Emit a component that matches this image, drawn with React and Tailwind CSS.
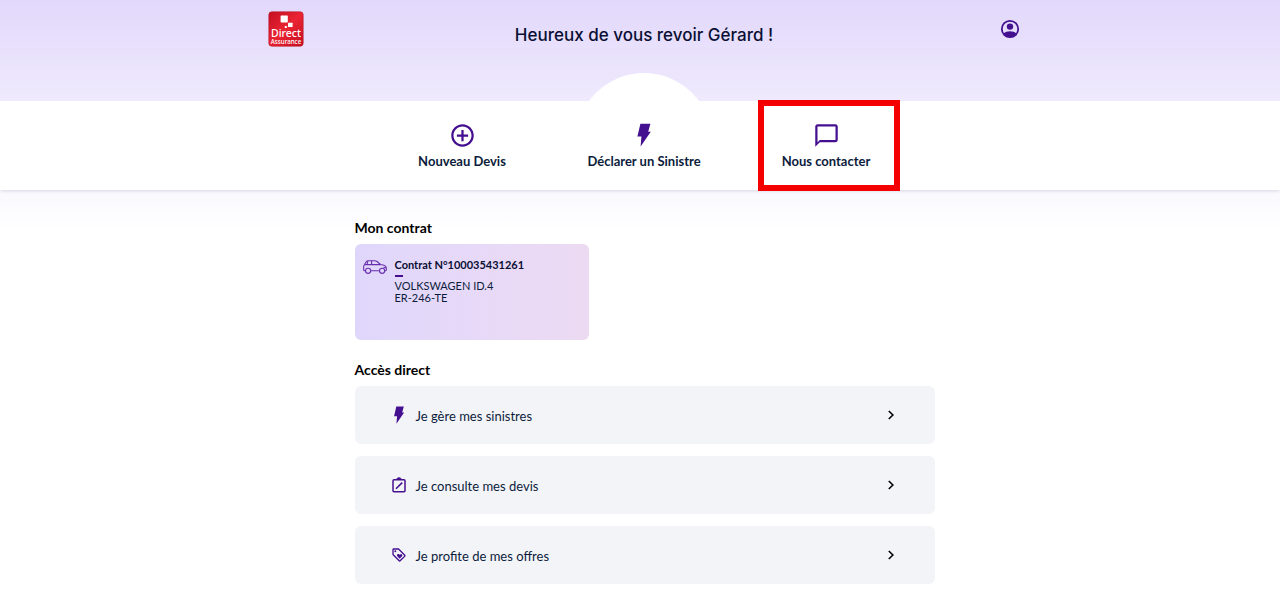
import { MdAddCircleOutline, MdChatBubbleOutline, MdOutlineLoyalty } from 'react-icons/md';

function DirectLogo() {
  return (
    <svg viewBox="0 0 36 36" className="size-9" role="img" aria-label="Direct Assurance">
      <defs>
        <linearGradient id="logoRed" x1="0" y1="0" x2="1" y2="1">
          <stop offset="0" stopColor="#c40f22" />
          <stop offset="0.5" stopColor="#ea2433" />
          <stop offset="1" stopColor="#c50d20" />
        </linearGradient>
      </defs>
      <rect x="0.8" y="0.8" width="34.4" height="34.4" rx="3" fill="url(#logoRed)" stroke="#b81a2c" strokeWidth="0.6" />
      <rect x="12.6" y="4.4" width="7.2" height="7" rx="0.6" fill="#fff" />
      <rect x="20" y="11.8" width="4.6" height="4.2" rx="0.5" fill="#fff" />
      <rect x="16.8" y="15" width="2" height="2" fill="#fff" />
      <text x="18" y="26.4" textAnchor="middle" fontFamily="Noto Sans, sans-serif" fontWeight="500" fontSize="10.5" fill="#fff">Direct</text>
      <text x="18" y="32.6" textAnchor="middle" fontFamily="Noto Sans, sans-serif" fontWeight="500" fontSize="6.2" fill="#fff">Assurance</text>
    </svg>
  );
}

function AccountIcon() {
  return (
    <svg viewBox="0 0 20 20" className="size-5" fill="none" aria-hidden="true">
      <circle cx="10" cy="10" r="8.2" stroke="currentColor" strokeWidth="1.8" />
      <circle cx="10" cy="7.6" r="3.2" fill="currentColor" />
      <path d="M3.6 14.6C5.2 13 7.5 12.2 10 12.2s4.8.8 6.4 2.4A8.4 8.4 0 0 1 10 18.4a8.4 8.4 0 0 1-6.4-3.8z" fill="currentColor" />
    </svg>
  );
}

function BoltIcon({ className }) {
  return (
    <svg viewBox="0 0 14 24" className={className} fill="currentColor" aria-hidden="true">
      <path d="M3.400.8h10L11.200 8.800H13.800L3.600 23.600 4.400 13.600H.4z" />
    </svg>
  );
}

function QuoteIcon({ className }) {
  return (
    <svg viewBox="0 0 16 16" className={className} fill="none" stroke="currentColor" strokeWidth="1.5" aria-hidden="true">
      <rect x="2" y="2.7" width="12" height="12" rx="1" />
      <path d="M5.8 2.2a2.2 1.6 0 0 1 4.400 0z" fill="currentColor" strokeWidth="0.6" />
      <path d="M5 11.800 11.200 5.600" strokeWidth="1.6" />
    </svg>
  );
}

function CarIcon() {
  return (
    <svg viewBox="0 0 24 16" className="h-4 w-6 shrink-0" fill="none" stroke="currentColor" strokeWidth="1.1" strokeLinejoin="round" aria-hidden="true">
      <path d="M2.4 11.800H1.600Q.7 11.800.7 10.800V7.200Q.7 6.200 1.600 5.600L3 3Q3.500 1.800 4.800 1.800H11.500Q13 1.800 14 2.500L17.500 5.500 21 6.300Q23.300 7 23.300 9V10.800Q23.300 11.800 22.400 11.800H21.800M7.800 11.800H16.400" />
      <path d="M1.800 5.600H17.500M8.600 1.800V5.600M4.800 2 4 5.600M20.600 8.400 23 8.800" />
      <circle cx="5.100" cy="11.800" r="2.600" />
      <circle cx="19.100" cy="11.800" r="2.600" />
    </svg>
  );
}

function Chevron() {
  return (
    <svg viewBox="0 0 6 10" className="h-2.5 w-1.5" fill="none" stroke="currentColor" strokeWidth="1.6" aria-hidden="true">
      <path d="M.8 1 4.900 5 .8 9" />
    </svg>
  );
}

const actions = [
  { label: 'Nouveau Devis', icon: <MdAddCircleOutline className="size-[27px]" /> },
  { label: 'Déclarer un Sinistre', icon: <BoltIcon className="h-6 w-3.5" /> },
  { label: 'Nous contacter', icon: <MdChatBubbleOutline className="size-[27px]" />, highlighted: true },
];

const links = [
  { label: 'Je gère mes sinistres', icon: <BoltIcon className="h-[18px] w-3" /> },
  { label: 'Je consulte mes devis', icon: <QuoteIcon className="size-4" /> },
  { label: 'Je profite de mes offres', icon: <MdOutlineLoyalty className="size-4" /> },
];

export default function App() {
  return (
    <div className="min-h-screen bg-white font-['Lato',sans-serif] text-[#0c1c3c]">
      <header className="relative h-[101px] overflow-hidden bg-linear-to-b from-[#e2d8fb] to-[#efeafd] pl-2">
        <div className="mx-auto flex max-w-[753px] items-start justify-between pt-[11px]">
          <a href="#accueil"><DirectLogo /></a>
          <h1 className="pt-3 font-['Inter',sans-serif] text-[17px] leading-6 font-medium text-[#0a0f33]">Heureux de vous revoir Gérard !</h1>
          <button type="button" aria-label="Mon compte" className="mt-2 w-9 text-[#45108f]">
            <span className="flex justify-end"><AccountIcon /></span>
          </button>
        </div>
        <div className="absolute top-[73px] left-1/2 ml-1 size-[136px] -translate-x-1/2 rounded-full bg-white" />
      </header>

      <nav className="relative bg-white pl-2 shadow-[0_2px_3px_-1px_rgba(40,30,80,0.16)]">
        <ul className="mx-auto grid h-[89px] max-w-[546px] grid-cols-3">
          {actions.map((a) => (
            <li key={a.label} className="relative">
              <button type="button" className="flex size-full flex-col items-center pt-5">
                <span className="flex h-7 items-center text-[#45108f]">{a.icon}</span>
                <span className="mt-1 text-[13px] leading-4 font-bold whitespace-nowrap">{a.label}</span>
              </button>
              {a.highlighted && <span className="pointer-events-none absolute -inset-y-px right-[17px] left-[23px] border-6 border-[#f40000]" />}
            </li>
          ))}
        </ul>
      </nav>

      <main className="bg-linear-to-b from-[#f9f8fe] to-white to-10% pb-5 pl-[9px]">
        <div className="mx-auto max-w-[580px] pt-7">
          <h2 className="text-sm leading-5 font-bold text-black">Mon contrat</h2>
          <a href="#contrat" className="mt-1.5 flex h-24 w-[234px] gap-2 rounded-md bg-linear-to-r from-[#dfd7fb] via-[#e7d9f8] to-[#ecdaf2] px-2 pt-[15px]">
            <span className="text-[#6a2fae]"><CarIcon /></span>
            <span>
              <strong className="block text-[11px] leading-3 font-bold whitespace-nowrap text-[#0a0f33]">Contrat N°100035431261</strong>
              <span className="mt-1 block h-0.5 w-2 bg-[#45108f]" />
              <span className="mt-[3px] block text-[11px] leading-3">VOLKSWAGEN ID.4<br />ER-246-TE</span>
            </span>
          </a>

          <h2 className="mt-5 text-sm leading-5 font-bold text-black">Accès direct</h2>
          <ul className="mt-1.5 flex flex-col gap-3">
            {links.map((l) => (
              <li key={l.label}>
                <a href="#acces" className="flex h-[58px] items-center rounded-md bg-[#f3f4f8] pr-[41px] pl-9">
                  <span className="flex w-4 justify-center text-[#45108f]">{l.icon}</span>
                  <span className="ml-[9px] flex-1 pt-0.5 text-[13px] leading-4">{l.label}</span>
                  <span className="text-black"><Chevron /></span>
                </a>
              </li>
            ))}
          </ul>
        </div>
      </main>
    </div>
  );
}
